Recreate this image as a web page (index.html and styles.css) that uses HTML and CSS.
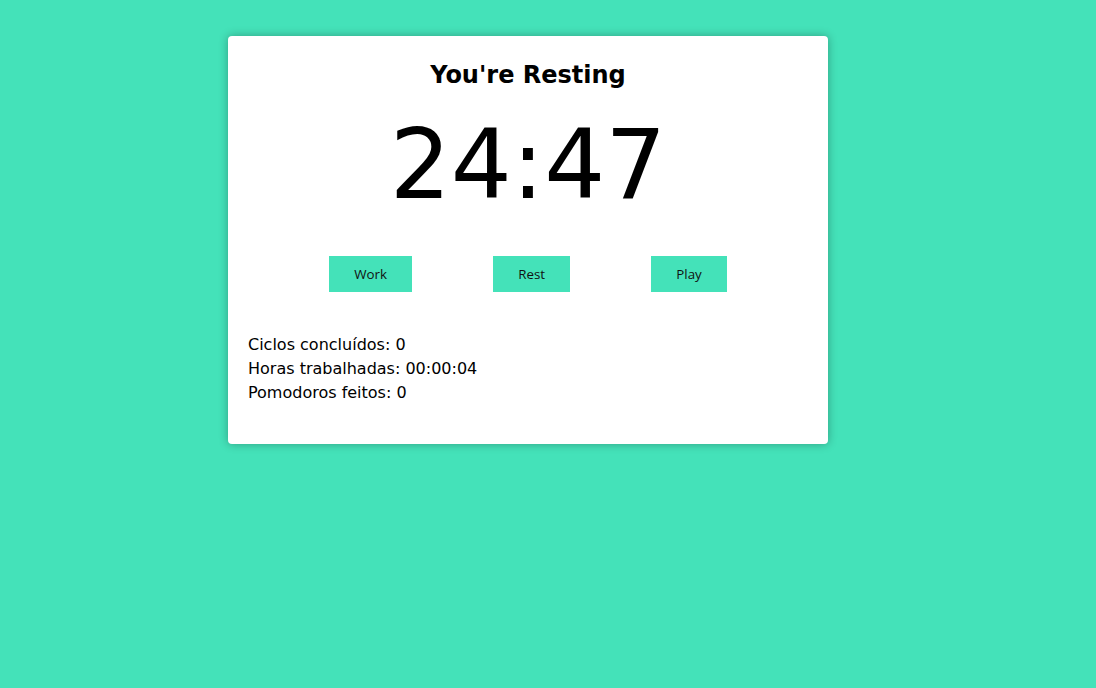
FILE: index.html
```html
<!DOCTYPE html>
<html>
<head>
<meta charset="utf-8">
<link rel="stylesheet" href="styles.css">
</head>
<body>
<main class="card">
  <h1 class="title">You're Resting</h1>
  <div class="timer">24:47</div>
  <div class="controls">
    <button class="btn">Work</button>
    <button class="btn">Rest</button>
    <button class="btn">Play</button>
  </div>
  <div class="stats">
    <p>Ciclos concluídos: 0</p>
    <p>Horas trabalhadas: 00:00:04</p>
    <p>Pomodoros feitos: 0</p>
  </div>
</main>
</body>
</html>
```

FILE: styles.css
```css
html, body {
  margin: 0;
  padding: 0;
}
body {
  background: #44e2b9;
  font-family: "DejaVu Sans", sans-serif;
  color: #000;
  min-height: 688px;
  padding-top: 36px;
  box-sizing: border-box;
}
.card {
  width: 600px;
  margin-left: 228px;
  background: #fff;
  border-radius: 4px;
  box-shadow: 0 0 10px rgba(0, 0, 0, 0.3);
  padding: 25px 20px 39px;
  box-sizing: border-box;
}
.title {
  margin: 0;
  font-size: 24px;
  font-weight: bold;
  text-align: center;
  line-height: 28px;
}
.timer {
  margin-top: 20px;
  font-size: 96px;
  line-height: 112px;
  text-align: center;
}
.controls {
  margin-top: 35px;
  display: flex;
  justify-content: space-evenly;
}
.btn {
  height: 36px;
  padding: 0 25px;
  border: none;
  background: #44e2b9;
  font-family: "Open Sans", sans-serif;
  font-size: 13.333px;
  color: #111;
}
.stats {
  margin-top: 41px;
  font-size: 16px;
  line-height: 24px;
}
.stats p {
  margin: 0;
}
```
